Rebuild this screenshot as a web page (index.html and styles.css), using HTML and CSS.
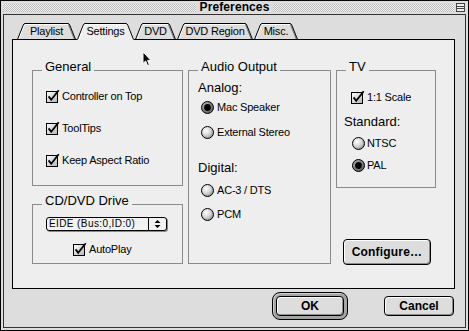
FILE: index.html
```html
<!DOCTYPE html>
<html>
<head>
<meta charset="utf-8">
<title>Preferences</title>
<link rel="stylesheet" href="styles.css">
</head>
<body>
<svg class="defs" width="0" height="0" aria-hidden="true">
  <defs>
    <linearGradient id="cbg" x1="0" y1="0" x2="1" y2="1">
      <stop offset="0" stop-color="#ffffff"/>
      <stop offset="1" stop-color="#b4b4b4"/>
    </linearGradient>
    <radialGradient id="rbg" cx="0.38" cy="0.35" r="0.75">
      <stop offset="0" stop-color="#ffffff"/>
      <stop offset="0.5" stop-color="#d6d6d6"/>
      <stop offset="1" stop-color="#808080"/>
    </radialGradient>
    <radialGradient id="rbgsel" cx="0.38" cy="0.35" r="0.75">
      <stop offset="0" stop-color="#c0c0c0"/>
      <stop offset="1" stop-color="#505050"/>
    </radialGradient>
  </defs>
  <symbol id="checkbox" viewBox="0 0 14 14">
    <rect x="0.5" y="2.5" width="11" height="11" fill="url(#cbg)" stroke="#000"/>
    <path d="M2.6 7.4 L5.2 10.8 L12.7 1.2" fill="none" stroke="#000" stroke-width="1.8"/>
  </symbol>
  <symbol id="radio" viewBox="0 0 13 13">
    <circle cx="6.5" cy="6.5" r="6" fill="url(#rbg)" stroke="#000"/>
  </symbol>
  <symbol id="radio-on" viewBox="0 0 13 13">
    <circle cx="6.5" cy="6.5" r="6" fill="url(#rbgsel)" stroke="#000"/>
    <circle cx="6.5" cy="6.5" r="3.4" fill="#000"/>
  </symbol>
  <symbol id="tab-l" viewBox="0 0 8 17">
    <path d="M0 16 L5.8 2 Q6.6 0 8 0 L8 16 Z" fill="#dddddd"/>
    <path d="M1.8 16 L7 3 Q7.4 1.6 8 1.5" fill="none" stroke="#fff"/>
    <path d="M0.5 16.5 L6.2 2.2 Q6.9 0.5 8 0.5" fill="none" stroke="#000"/>
  </symbol>
  <symbol id="tab-r" viewBox="0 0 8 17">
    <path d="M0 0 Q1.4 0 2.2 2 L7.8 16 L0 16 Z" fill="#dddddd"/>
    <path d="M0 1.5 Q0.6 1.6 0.9 2.6 L6.2 16" fill="none" stroke="#777"/>
    <path d="M0 0.5 Q1.1 0.5 1.8 2.2 L7.5 16.5" fill="none" stroke="#000"/>
  </symbol>
  <symbol id="tab-l-on" viewBox="0 0 8 17">
    <path d="M0 17 L5.8 2 Q6.6 0 8 0 L8 17 Z" fill="#eeeeee"/>
    <path d="M1.8 17 L7 3 Q7.4 1.6 8 1.5" fill="none" stroke="#fff"/>
    <path d="M0.5 16.5 L6.2 2.2 Q6.9 0.5 8 0.5" fill="none" stroke="#000"/>
  </symbol>
  <symbol id="tab-r-on" viewBox="0 0 8 17">
    <path d="M0 0 Q1.4 0 2.2 2 L8 17 L0 17 Z" fill="#eeeeee"/>
    <path d="M0 0.5 Q1.1 0.5 1.8 2.2 L7.5 16.5" fill="none" stroke="#000"/>
  </symbol>
</svg>

<div class="window">
  <div class="titlebar">
    <div class="stripes"></div>
    <div class="title">Preferences</div>
    <div class="title-right">
      <div class="stripes"></div>
      <svg class="collapse" viewBox="0 0 9 9" width="9" height="9">
        <rect x="0.5" y="0.5" width="8" height="8" fill="#eeeeee" stroke="#444"/>
        <path d="M0.5 3.5H8.5M0.5 5.5H8.5" stroke="#444"/>
      </svg>
    </div>
  </div>

  <div class="body">
    <div class="tabs">
      <div class="tab">
        <svg class="tab-edge"><use href="#tab-l"/></svg>
        <span class="tab-label w-playlist">Playlist</span>
        <svg class="tab-edge"><use href="#tab-r"/></svg>
      </div>
      <div class="tab active">
        <svg class="tab-edge"><use href="#tab-l-on"/></svg>
        <span class="tab-label w-settings">Settings</span>
        <svg class="tab-edge"><use href="#tab-r-on"/></svg>
      </div>
      <div class="tab">
        <svg class="tab-edge"><use href="#tab-l"/></svg>
        <span class="tab-label w-dvd">DVD</span>
        <svg class="tab-edge"><use href="#tab-r"/></svg>
      </div>
      <div class="tab">
        <svg class="tab-edge"><use href="#tab-l"/></svg>
        <span class="tab-label w-region">DVD Region</span>
        <svg class="tab-edge"><use href="#tab-r"/></svg>
      </div>
      <div class="tab">
        <svg class="tab-edge"><use href="#tab-l"/></svg>
        <span class="tab-label w-misc">Misc.</span>
        <svg class="tab-edge"><use href="#tab-r"/></svg>
      </div>
    </div>

    <div class="panel">
      <div class="col col-left">
        <div class="group group-general">
          <div class="group-title">General</div>
          <div class="check-list">
            <div class="check-row"><svg class="cb"><use href="#checkbox"/></svg><span>Controller on Top</span></div>
            <div class="check-row"><svg class="cb"><use href="#checkbox"/></svg><span>ToolTips</span></div>
            <div class="check-row"><svg class="cb"><use href="#checkbox"/></svg><span>Keep Aspect Ratio</span></div>
          </div>
        </div>
        <div class="group group-drive">
          <div class="group-title">CD/DVD Drive</div>
          <div class="popup">
            <span class="popup-text">EIDE (Bus:0,ID:0)</span>
            <span class="popup-arrows">
              <svg viewBox="0 0 17 12" width="17" height="12">
                <path d="M5.5 5 L8.5 2 L11.5 5 Z M5.5 7 L8.5 10 L11.5 7 Z" fill="#000"/>
              </svg>
            </span>
          </div>
          <div class="check-row autoplay"><svg class="cb"><use href="#checkbox"/></svg><span>AutoPlay</span></div>
        </div>
      </div>

      <div class="col col-mid">
        <div class="group group-audio">
          <div class="group-title">Audio Output</div>
          <div class="sublabel analog">Analog:</div>
          <div class="radio-list analog-list">
            <div class="radio-row"><svg class="rb"><use href="#radio-on"/></svg><span>Mac Speaker</span></div>
            <div class="radio-row"><svg class="rb"><use href="#radio"/></svg><span>External Stereo</span></div>
          </div>
          <div class="sublabel digital">Digital:</div>
          <div class="radio-list digital-list">
            <div class="radio-row"><svg class="rb"><use href="#radio"/></svg><span>AC-3 / DTS</span></div>
            <div class="radio-row"><svg class="rb"><use href="#radio"/></svg><span>PCM</span></div>
          </div>
        </div>
      </div>

      <div class="col col-right">
        <div class="group group-tv">
          <div class="group-title">TV</div>
          <div class="check-row scale"><svg class="cb"><use href="#checkbox"/></svg><span>1:1 Scale</span></div>
          <div class="sublabel standard">Standard:</div>
          <div class="radio-list tv-list">
            <div class="radio-row"><svg class="rb"><use href="#radio"/></svg><span>NTSC</span></div>
            <div class="radio-row"><svg class="rb"><use href="#radio-on"/></svg><span>PAL</span></div>
          </div>
        </div>
        <button class="btn btn-configure">Configure…</button>
      </div>
    </div>

    <div class="buttons">
      <div class="default-ring"><button class="btn btn-ok">OK</button></div>
      <button class="btn btn-cancel">Cancel</button>
    </div>
  </div>

  <svg class="cursor" viewBox="0 0 10 16" width="10" height="16">
    <path d="M1 1 L1 12.5 L3.6 10 L5.6 14.6 L7.4 13.8 L5.5 9.4 L9 9.4 Z" fill="#000" stroke="#fff" stroke-width="1"/>
  </svg>
</div>
</body>
</html>
```

FILE: styles.css
```css
* { box-sizing: border-box; }

html, body {
  margin: 0;
  padding: 0;
}

body {
  width: 469px;
  height: 331px;
  overflow: hidden;
  background: #000;
  font-family: "Liberation Sans", Arial, sans-serif;
  color: #000;
}

.defs {
  position: absolute;
  width: 0;
  height: 0;
  overflow: hidden;
}

.window {
  position: relative;
  width: 469px;
  height: 331px;
  border: 1px solid #000;
  background: #dddddd;
  display: flex;
  flex-direction: column;
}

/* ---------- title bar ---------- */
.titlebar {
  height: 13px;
  flex: none;
  display: flex;
  align-items: center;
  padding: 0 2px;
}

.stripes {
  flex: 1;
  height: 8px;
  background: repeating-conic-gradient(#bcbcbc 0 25%, #f0f0f0 0 50%) 0 0 / 2px 2px;
}

.title {
  font-size: 12px;
  font-weight: bold;
  line-height: 13px;
  padding: 0 4px;
  letter-spacing: 0.1px;
}

.title-right {
  flex: 1;
  display: flex;
  align-items: center;
}

.collapse {
  flex: none;
  margin-left: 2px;
  margin-right: 1px;
}

/* ---------- body frame ---------- */
.body {
  flex: 1;
  margin: 0 2px 2px;
  border: 1px solid #333;
  background: #dddddd;
  padding: 8px 11px 0 8px;
  display: flex;
  flex-direction: column;
}

/* ---------- tabs ---------- */
.tabs {
  display: flex;
  align-items: flex-start;
  gap: 1px;
  height: 16px;
  margin-left: 5px;
  flex: none;
}

.tab {
  display: flex;
  height: 16px;
  overflow: visible;
}

.tab.active {
  height: 17px;
  position: relative;
  z-index: 1;
}

.tab-edge {
  width: 8px;
  height: 17px;
  flex: none;
}

.tab-label {
  display: block;
  height: 16px;
  border-top: 1px solid #000;
  background: #dddddd;
  box-shadow: inset 0 1px #fff;
  font-size: 11px;
  line-height: 15px;
  letter-spacing: -0.2px;
  text-align: center;
  white-space: nowrap;
}

.tab.active .tab-label {
  height: 17px;
  background: #eeeeee;
}

.w-playlist { width: 43px; }
.w-settings { width: 41px; }
.w-dvd { width: 25px; }
.w-region { width: 60px; }
.w-misc { width: 28px; }

/* ---------- panel ---------- */
.panel {
  width: 443px;
  height: 250px;
  flex: none;
  border: 1px solid #000;
  background: #eeeeee;
  display: flex;
  gap: 5px;
  padding: 30px 0 0 19px;
}

.col {
  display: flex;
  flex-direction: column;
  flex: none;
}

.col-left { width: 151px; }
.col-mid { width: 143px; }
.col-right { width: 100px; }

.group {
  border: 1px solid #8a8a8a;
}

.group-title {
  width: fit-content;
  margin: -11px 0 0 9px;
  padding: 0 3px;
  background: #eeeeee;
  font-size: 13px;
  line-height: 14px;
  white-space: nowrap;
}

.group-general { height: 116px; }
.group-drive { height: 60px; margin-top: 18px; }
.group-audio { height: 194px; padding-left: 9px; }
.group-audio .group-title { margin-left: 0; }
.group-tv { height: 118px; padding-left: 7px; }
.group-tv .group-title { margin-left: 2px; }

.cb {
  width: 14px;
  height: 14px;
  flex: none;
}

.rb {
  width: 13px;
  height: 13px;
  flex: none;
}

.check-row,
.radio-row {
  display: flex;
  align-items: center;
  font-size: 11px;
  letter-spacing: -0.2px;
  white-space: nowrap;
}

.check-row { gap: 2px; }
.radio-row { gap: 3px; }

.check-list {
  margin-top: 6px;
  padding-left: 13px;
}

.check-list .check-row { height: 32px; }

.sublabel {
  font-size: 13px;
  line-height: 14px;
}

.analog { margin-top: 7px; }
.digital { margin-top: 17px; }

.radio-list {
  display: flex;
  flex-direction: column;
  padding-left: 3px;
}

.radio-list .radio-row { height: 24px; }
.analog-list { gap: 1px; }
.digital-list { margin-top: 3px; }

.scale {
  height: 14px;
  margin-top: 16px;
  padding-left: 7px;
}

.standard { margin-top: 11px; }

.tv-list {
  margin-top: 3px;
  padding-left: 8px;
}

.tv-list .radio-row { height: 22px; gap: 2px; }

/* ---------- popup ---------- */
.popup {
  display: flex;
  width: 121px;
  height: 14px;
  margin: 9px 0 0 13px;
  border: 1px solid #000;
  border-radius: 3px;
  background: #f2f2f2;
  box-shadow: 1px 1px 0 #8a8a8a;
}

.popup-text {
  flex: 1;
  font-size: 10px;
  line-height: 12px;
  letter-spacing: 0.4px;
  padding-left: 2px;
  white-space: nowrap;
  overflow: hidden;
}

.popup-arrows {
  width: 18px;
  border-left: 1px solid #000;
  display: flex;
  align-items: center;
}

.autoplay {
  height: 14px;
  margin-top: 11px;
  padding-left: 40px;
}

/* ---------- buttons ---------- */
.btn {
  display: flex;
  align-items: center;
  justify-content: center;
  margin: 0;
  padding: 0;
  font-family: "Liberation Sans", Arial, sans-serif;
  font-size: 12px;
  font-weight: bold;
  color: #000;
  border: 1px solid #000;
  border-radius: 4px;
  background: #dddddd;
  box-shadow: inset 1px 1px #ffffff, inset -1px -1px #8c8c8c;
  white-space: nowrap;
}

.btn-configure {
  width: 88px;
  height: 26px;
  margin: 51px 0 0 7px;
  letter-spacing: 0.2px;
}

.buttons {
  display: flex;
  justify-content: flex-end;
  align-items: center;
  gap: 36px;
  margin-top: 3px;
}

.default-ring {
  padding: 3px;
  border: 1px solid #000;
  border-radius: 8px;
  background: #a4a4a4;
  box-shadow: inset 1px 1px #d0d0d0;
}

.btn-ok {
  width: 68px;
  height: 20px;
}

.btn-cancel {
  width: 70px;
  height: 20px;
}

/* ---------- mouse pointer (overlay) ---------- */
.cursor {
  position: absolute;
  left: 141px;
  top: 50px;
}
```
